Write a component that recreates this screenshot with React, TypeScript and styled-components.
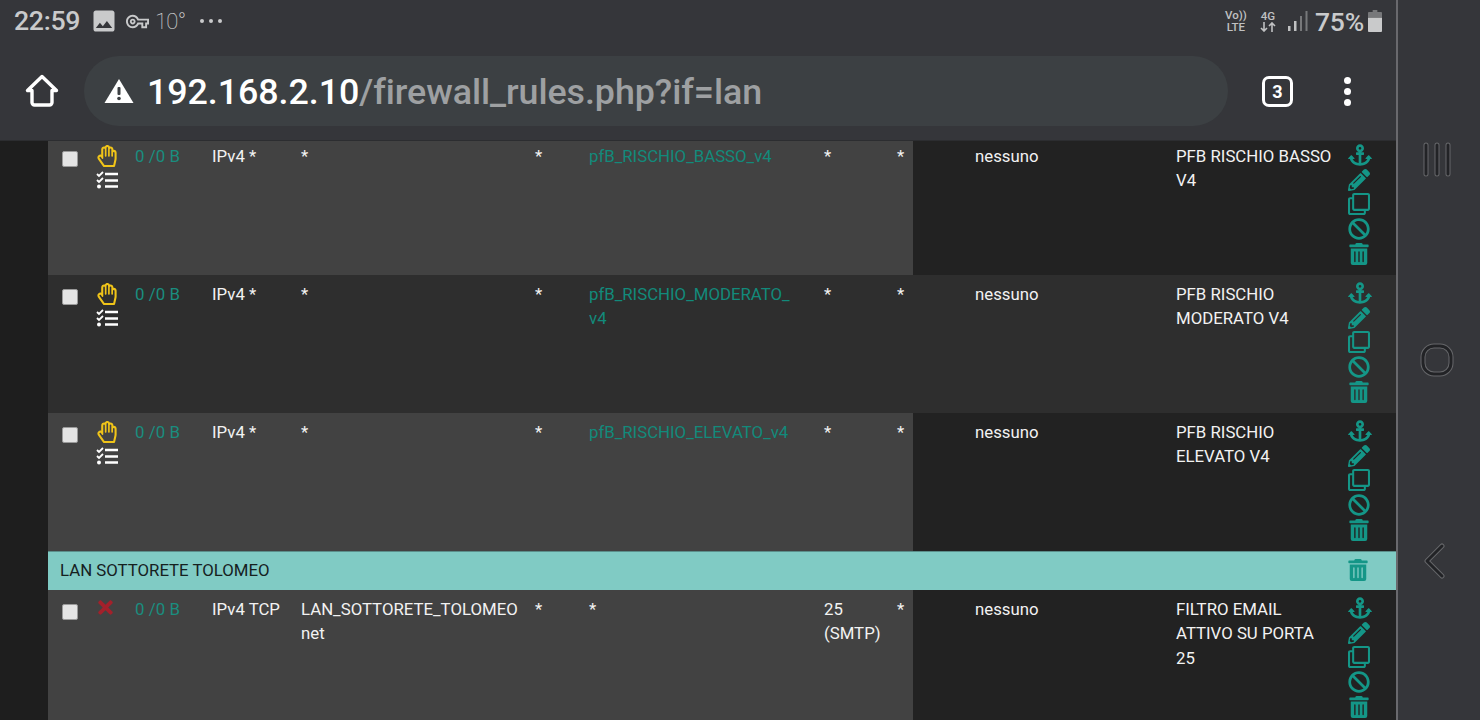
import React from "react";
import styled, { createGlobalStyle } from "styled-components";
import { FaAnchor, FaPencilAlt, FaRegClone, FaBan, FaTrashAlt, FaRegHandPaper, FaTimes } from "react-icons/fa";
import { MdImage, MdOutlineVpnKey } from "react-icons/md";

const Global = createGlobalStyle`
  html, body { margin: 0; padding: 0; background: #35363a; }
  body { font-family: Roboto, "Liberation Sans", sans-serif; }
  * { box-sizing: border-box; }
`;

const Screen = styled.div`
  width: 1480px; height: 720px; display: flex; overflow: hidden; background: #35363a;
`;
const Main = styled.div`
  width: 1396px; height: 720px; display: flex; flex-direction: column; flex: none;
`;
const Divider = styled.div`
  width: 2px; flex: none; background: #69696d;
`;
const NavBar = styled.nav`
  flex: 1; display: flex; flex-direction: column; align-items: center; justify-content: space-between;
  padding: 140px 4px 140px 0;
`;
const StatusBar = styled.div`
  height: 42px; flex: none; display: flex; align-items: center; padding: 0 13px 0 14px; color: #c9cacb;
`;
const Clock = styled.span`
  font-size: 26.7px; font-weight: 500; letter-spacing: -0.3px; width: 78px;
`;
const Temp = styled.span`
  font-size: 22px; font-weight: 100; margin-left: 6px; color: #e2e2e2; letter-spacing: -0.7px;
`;
const Dots = styled.span`
  display: flex; gap: 5px; margin-left: 15px;
`;
const Dot = styled.i`
  width: 4px; height: 4px; border-radius: 50%; background: #c9cacb; display: block;
`;
const Spacer = styled.div`flex: 1;`;
const TinyText = styled.span`
  font-size: 11.5px; line-height: 12px; font-weight: 500; text-align: center; color: #c0c1c2; display: block;
`;
const TinyStack = styled.div<{ $ml: number }>`
  display: flex; flex-direction: column; align-items: center; margin-left: ${p => p.$ml}px; width: 22px;
`;
const Battery = styled.span`
  font-size: 26.5px; font-weight: 500; margin-left: 6px; color: #c9cacb; letter-spacing: -0.2px;
`;
const Toolbar = styled.div`
  height: 98px; flex: none; display: flex; align-items: center; padding-left: 25px;
`;
const Pill = styled.div`
  width: 1144px; height: 70px; margin: 0 0 0 25px; border-radius: 35px; background: #3c4043;
  display: flex; align-items: center; padding-left: 20px;
`;
const Url = styled.div`
  font-size: 35.8px; font-weight: 500; margin: 2px 0 0 13px; color: #9ea0a2; letter-spacing: -0.06px; white-space: nowrap;
`;
const Host = styled.span`color: #fff;`;
const TabCount = styled.div`
  width: 31px; height: 31px; border: 3px solid #fff; border-radius: 7px; margin-left: 34px;
  display: flex; align-items: center; justify-content: center; color: #fff; font-size: 18px; font-weight: 700;
`;
const Kebab = styled.div`
  display: flex; flex-direction: column; gap: 4px; margin-left: 51px;
`;
const KebabDot = styled.i`
  width: 7px; height: 7px; border-radius: 50%; background: #fff; display: block;
`;
const Content = styled.div`
  flex: 1; overflow: hidden; background: #1e1e1e; padding-left: 48px; border-top: 1px solid #2c2d30;
`;
const Table = styled.div`
  margin-top: -4px; color: #f2f2f2; font-size: 16.8px; line-height: 24.4px;
`;
const Row = styled.div<{ $bg: string }>`
  display: grid; min-height: 138px; background: ${p => p.$bg};
  grid-template-columns: 37px 38px 77px 89px 234px 54px 235px 73px 28px 50px 201px 172px 60px;
`;
const Cell = styled.div<{ $tail?: number; $dark?: string }>`
  padding: 7px ${p => p.$tail ?? 10}px 0 12px; min-width: 0;
  ${p => (p.$dark ? `background: ${p.$dark};` : "")}
`;
const Check = styled.span`
  display: block; width: 16px; height: 16px; margin: 7px 0 0 2px; background: #e4e4e4; border: 1px solid #9a9a9a; border-radius: 2px;
`;
const Traffic = styled.a`
  color: #1a8d7f; letter-spacing: 0.1px;
`;
const Alias = styled.a`
  color: #128a7b;
`;
const StateIcons = styled.div`
  display: flex; flex-direction: column; gap: 4px; margin: 1px 0 0 -1px; color: #f0c419;
`;
const Blocked = styled.div`
  color: #a3212b; margin: 0 0 0 -2px; font-size: 21px; line-height: 24px;
`;
const Actions = styled.div`
  display: flex; flex-direction: column; color: #149687; font-size: 22px; margin-top: -1px;
`;
const ActionIcon = styled.span`
  height: 24.6px; display: flex; align-items: center;
`;
const Separator = styled.div`
  height: 39px; background: #80cbc4; border-top: 1px solid #5b8f8b; display: flex; align-items: center;
  justify-content: space-between; padding: 0 27px 2px 12px; font-size: 16.8px; color: #16211f;
`;
const SepTrash = styled.span`
  color: #149687; font-size: 22px; display: flex; margin-bottom: 1px;
`;

const ActionSet = () => (
  <Actions>
    <ActionIcon><FaAnchor size={24} /></ActionIcon>
    <ActionIcon><FaPencilAlt size={22} /></ActionIcon>
    <ActionIcon><FaRegClone size={22} /></ActionIcon>
    <ActionIcon><FaBan size={22} /></ActionIcon>
    <ActionIcon><FaTrashAlt size={22} /></ActionIcon>
  </Actions>
);

const ListIcon = () => (
  <svg width="23" height="18" viewBox="0 0 23 18" fill="none" stroke="#fff">
    <path d="M1 3l2 2 4-4M1 9l2 2 4-4" strokeWidth="1.8" />
    <circle cx="3" cy="15.500" r="2" fill="#fff" stroke="none" />
    <path d="M9 3h13M9 9.500h13M9 15.500h13" strokeWidth="2.600" />
  </svg>
);

type RuleProps = {
  bg: string; dark: string; blocked?: boolean; proto: string; source: string; sport: string;
  dest: React.ReactNode; dport: string; desc: string;
};

const Rule = ({ bg, dark, blocked, proto, source, sport, dest, dport, desc }: RuleProps) => (
  <Row $bg={bg}>
    <Cell><Check /></Cell>
    <Cell $tail={0}>
      {blocked ? (
        <Blocked><FaTimes /></Blocked>
      ) : (
        <StateIcons>
          <FaRegHandPaper size={22} />
          <ListIcon />
        </StateIcons>
      )}
    </Cell>
    <Cell><Traffic>0 /0 B</Traffic></Cell>
    <Cell $tail={0}>{proto}</Cell>
    <Cell $tail={0}>{source}</Cell>
    <Cell>{sport}</Cell>
    <Cell $tail={12}>{dest}</Cell>
    <Cell>{dport}</Cell>
    <Cell $tail={0}>*</Cell>
    <Cell $dark={dark} />
    <Cell $dark={dark}>nessuno</Cell>
    <Cell $dark={dark} $tail={3}>{desc}</Cell>
    <Cell $dark={dark}><ActionSet /></Cell>
  </Row>
);

export default function App() {
  return (
    <Screen>
      <Global />
      <Main>
        <StatusBar>
          <Clock>22:59</Clock>
          <MdImage size={28} style={{ marginLeft: -2 }} />
          <MdOutlineVpnKey size={23} style={{ marginLeft: 8 }} />
          <Temp>10°</Temp>
          <Dots><Dot /><Dot /><Dot /></Dots>
          <Spacer />
          <TinyStack $ml={0}><TinyText>Vo))</TinyText><TinyText>LTE</TinyText></TinyStack>
          <TinyStack $ml={10}>
            <TinyText>4G</TinyText>
            <svg width="16" height="10" viewBox="0 0 16 10" fill="none" stroke="#c0c1c2" strokeWidth="1.6">
              <path d="M4 0v9M1 6l3 3 3-3M12 10V1M9 4l3-3 3 3" />
            </svg>
          </TinyStack>
          <svg width="22" height="22" viewBox="0 0 22 22" style={{ marginLeft: 8 }}>
            <rect x="1" y="16" width="2.500" height="5" fill="#c0c1c2" />
            <rect x="7" y="11" width="2.500" height="10" fill="#c0c1c2" />
            <rect x="13" y="6" width="2" height="15" fill="#77787a" />
            <rect x="18.500" y="1" width="2" height="20" fill="#77787a" />
          </svg>
          <Battery>75%</Battery>
          <svg width="14" height="22" viewBox="0 0 15 23" preserveAspectRatio="none" style={{ marginLeft: 4, marginRight: 1 }}>
            <path d="M5 0h5v2h4a1 1 0 0 1 1 1v5H0V3a1 1 0 0 1 1-1h4z" fill="#77787a" />
            <path d="M0 8h15v14a1 1 0 0 1-1 1H1a1 1 0 0 1-1-1z" fill="#c9cacb" />
          </svg>
        </StatusBar>
        <Toolbar>
          <svg width="34" height="34" viewBox="0 0 34 34" fill="none" stroke="#fff" strokeWidth="3.400" strokeLinejoin="round">
            <path d="M17 2.500L2.500 16.500H7V28.500a2.500 2.500 0 0 0 2.500 2.500H24.500a2.500 2.500 0 0 0 2.500-2.500V16.500H31.500Z" />
          </svg>
          <Pill>
            <svg width="30" height="26" viewBox="0 0 30 26">
              <path d="M15 1L29.500 25H0.500Z" fill="#fff" />
              <rect x="13.500" y="9" width="3" height="8" rx="1" fill="#3c4043" />
              <circle cx="15" cy="20.500" r="1.800" fill="#3c4043" />
            </svg>
            <Url><Host>192.168.2.10</Host>/firewall_rules.php?if=lan</Url>
          </Pill>
          <TabCount>3</TabCount>
          <Kebab><KebabDot /><KebabDot /><KebabDot /></Kebab>
        </Toolbar>
        <Content>
          <Table>
            <Rule bg="#424242" dark="#222222" proto="IPv4 *" source="*" sport="*"
              dest={<Alias>pfB_RISCHIO_BASSO_v4</Alias>} dport="*" desc="PFB RISCHIO BASSO V4" />
            <Rule bg="#2e2e2e" dark="#2e2e2e" proto="IPv4 *" source="*" sport="*"
              dest={<Alias>pfB_RISCHIO_MODERATO_<wbr />v4</Alias>} dport="*" desc="PFB RISCHIO MODERATO V4" />
            <Rule bg="#424242" dark="#222222" proto="IPv4 *" source="*" sport="*"
              dest={<Alias>pfB_RISCHIO_ELEVATO_v4</Alias>} dport="*" desc="PFB RISCHIO ELEVATO V4" />
            <Separator>
              LAN SOTTORETE TOLOMEO
              <SepTrash><FaTrashAlt size={22} /></SepTrash>
            </Separator>
            <Rule bg="#424242" dark="#222222" blocked proto="IPv4 TCP" source="LAN_SOTTORETE_TOLOMEO net" sport="*"
              dest="*" dport="25 (SMTP)" desc="FILTRO EMAIL ATTIVO SU PORTA 25" />
          </Table>
        </Content>
      </Main>
      <Divider />
      <NavBar>
        <svg width="30" height="38" viewBox="0 0 30 38" fill="none">
          <g stroke="#66676a" strokeWidth="5" strokeLinecap="round"><path d="M4 5v29M15 5v29M26 5v29" /></g>
          <g stroke="#222326" strokeWidth="3" strokeLinecap="round"><path d="M4 5v29M15 5v29M26 5v29" /></g>
        </svg>
        <svg width="34" height="34" viewBox="0 0 34 34" fill="none">
          <rect x="3" y="3" width="28" height="28" rx="11" stroke="#66676a" strokeWidth="5" />
          <rect x="3" y="3" width="28" height="28" rx="11" stroke="#222326" strokeWidth="3" />
        </svg>
        <svg width="26" height="38" viewBox="0 0 26 38" fill="none" strokeLinecap="round" strokeLinejoin="round">
          <path d="M18 4L3 19l15 15" stroke="#66676a" strokeWidth="5" />
          <path d="M18 4L3 19l15 15" stroke="#222326" strokeWidth="3" />
        </svg>
      </NavBar>
    </Screen>
  );
}
